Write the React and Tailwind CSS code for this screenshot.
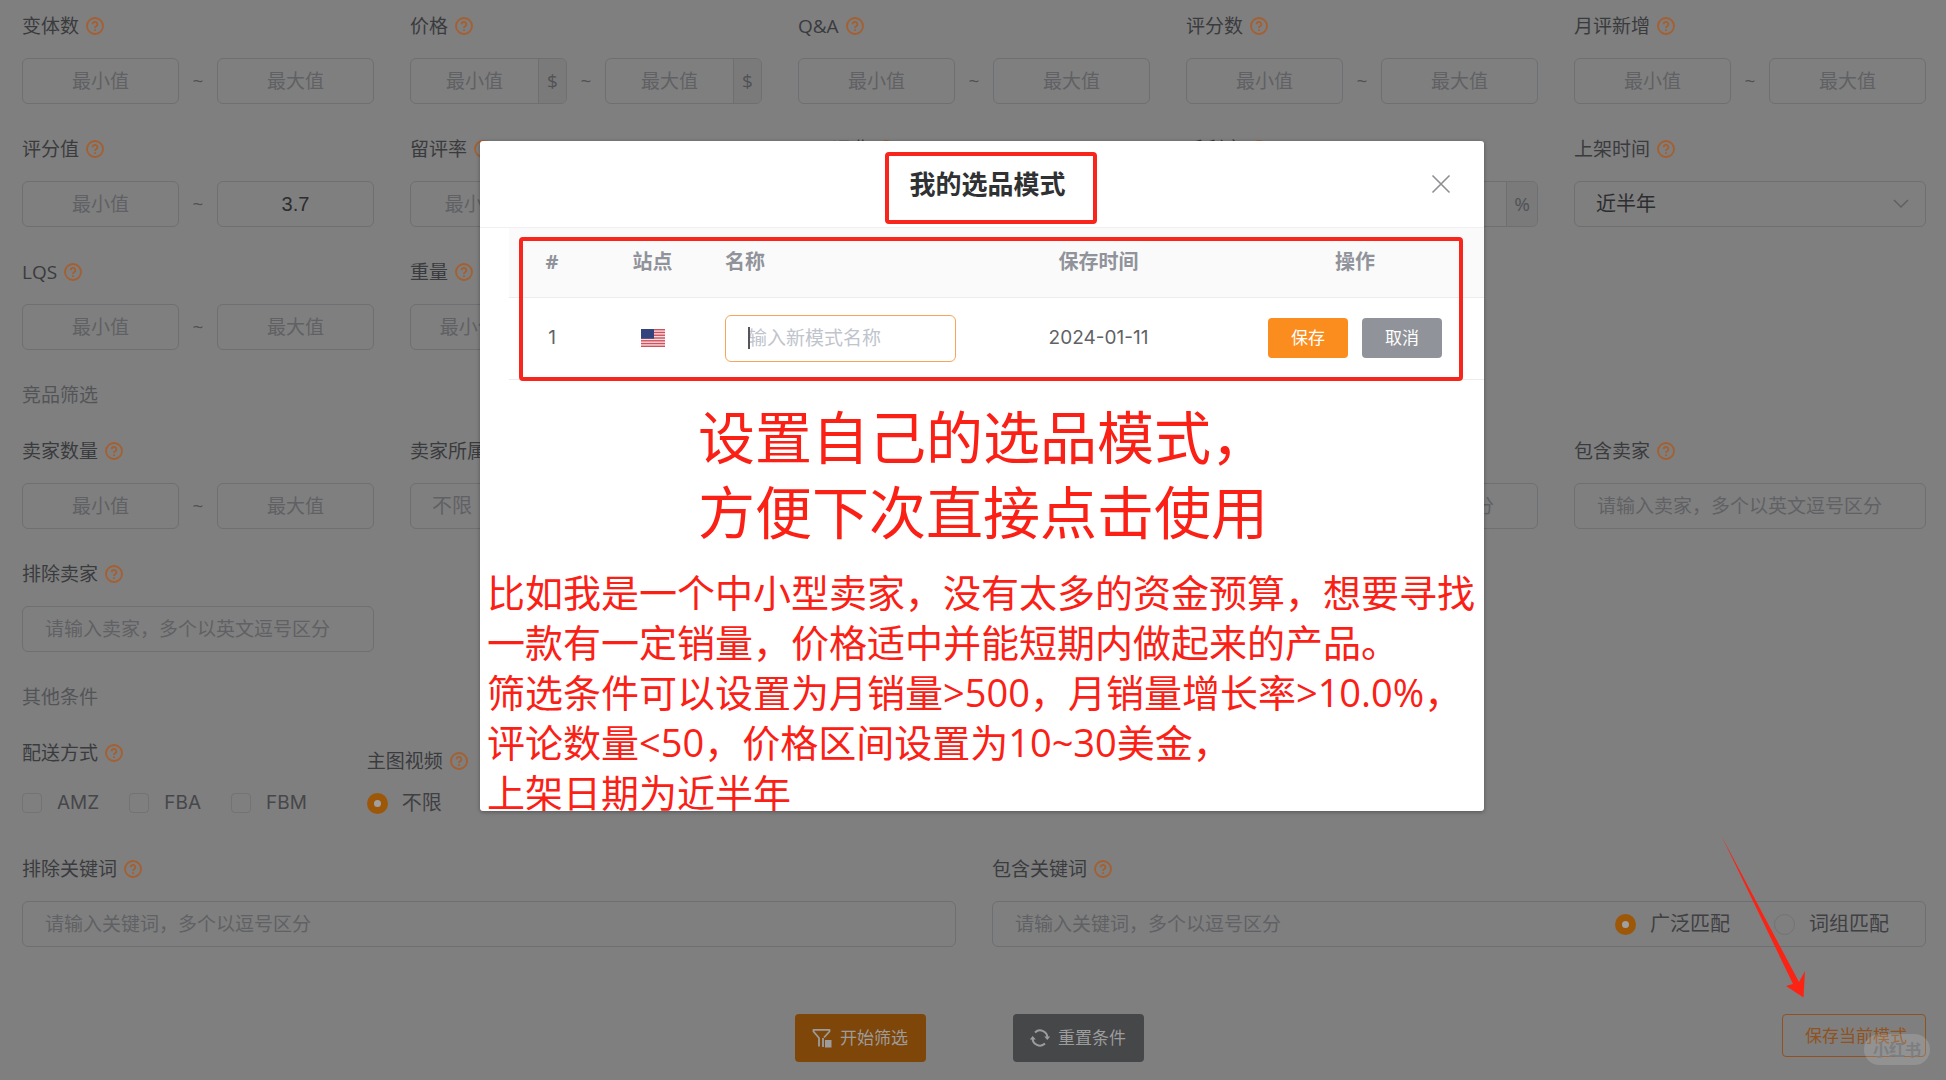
import React, { useState } from 'react';

const INPUT = 'min-w-0 bg-transparent outline-none placeholder:text-[19px] placeholder:text-[#606164]';
const BOX = 'flex h-[46px] rounded-md border border-[#6e6f72]';

// Orange question mark next to every filter label
function HelpIcon() {
    return (
        <svg className="h-[18px] w-[18px] shrink-0" viewBox="0 0 18 18" fill="none" stroke="#a55f30" strokeWidth="1.8">
            <circle cx="9" cy="9" r="8" />
            <path d="M6.700 7.300a2.300 2.300 0 1 1 3.400 1.900c-.8.5-1.100.8-1.100 1.700" />
            <path d="M9 12.200v1.700" />
        </svg>
    );
}

function Label({ text, htmlFor }) {
    return (
        <div className="flex h-7 items-center gap-[7px] text-[19px] leading-7 text-[#3a3b3e]">
            <label htmlFor={htmlFor} className="whitespace-nowrap">{text}</label>
            <HelpIcon />
        </div>
    );
}

function NumberBox({ id, label, placeholder, unit, defaultValue }) {
    return (
        <div className={`${BOX} min-w-0 flex-1 overflow-hidden`}>
            <input
                id={id}
                aria-label={label}
                placeholder={placeholder}
                defaultValue={defaultValue}
                className={`${INPUT} w-full flex-1 text-center font-['Liberation_Sans','Noto_Sans_CJK_SC',sans-serif] text-xl text-[#2c2d2f]`}
            />
            {unit && (
                <span className="flex min-w-7 items-center justify-center border-l border-[#6e6f72] bg-[#7a7a7b] px-[7px] text-[19px] text-[#515255]">
                    {unit}
                </span>
            )}
        </div>
    );
}

function RangeField({ id, label, unit, max }) {
    return (
        <div className="flex flex-col gap-[18px]">
            <Label text={label} htmlFor={id} />
            <div className="flex items-center">
                <NumberBox id={id} placeholder="最小值" unit={unit} />
                <span className="w-[38px] text-center text-[19px] text-[#515255]">~</span>
                <NumberBox label={label} placeholder="最大值" unit={unit} defaultValue={max} />
            </div>
        </div>
    );
}

function SelectField({ id, label, value, color = 'text-[#2c2d2f]' }) {
    return (
        <div className="flex flex-col gap-[18px]">
            <Label text={label} htmlFor={id} />
            <div className={`${BOX} relative items-center`}>
                <select id={id} className={`h-full w-full appearance-none bg-transparent pl-[21px] text-xl outline-none ${color}`}>
                    <option>{value}</option>
                </select>
                <svg className="pointer-events-none absolute right-4 h-[10px] w-4" viewBox="0 0 16 10" fill="none" stroke="#5f6063" strokeWidth="1.5">
                    <path d="M1 1l7 7 7-7" />
                </svg>
            </div>
        </div>
    );
}

function TextField({ id, label, placeholder, children }) {
    return (
        <div className="flex flex-col gap-[18px]">
            {label ? <Label text={label} htmlFor={id} /> : <div className="h-7" />}
            <div className={`${BOX} items-center`}>
                <input
                    id={id}
                    aria-label={label || '包含品牌'}
                    placeholder={placeholder}
                    className={`${INPUT} h-full flex-1 pl-[22px] text-[19px] text-[#2c2d2f]`}
                />
                {children}
            </div>
        </div>
    );
}

function Radio({ name, label, defaultChecked }) {
    return (
        <label className="flex items-center gap-[14px] whitespace-nowrap text-xl leading-7 text-[#3f4043]">
            <input
                type="radio"
                name={name}
                defaultChecked={defaultChecked}
                className="h-[21px] w-[21px] appearance-none rounded-full border border-[#727376] checked:border-[7px] checked:border-[#9c5808] checked:bg-[#a0a0a0]"
            />
            {label}
        </label>
    );
}

function Checkbox({ label }) {
    return (
        <label className="flex items-center gap-[15px] font-['Inter',sans-serif] text-[19px] leading-7 text-[#46474a]">
            <input type="checkbox" className="h-5 w-5 appearance-none rounded-sm border border-[#727376]" />
            {label}
        </label>
    );
}

function UsFlag() {
    return (
        <svg className="mx-auto h-[18px] w-6" viewBox="0 0 24 18" role="img" aria-label="US">
            <rect width="24" height="18" fill="#f6dfe1" />
            {[0, 1, 2, 3, 4, 5, 6].map(i => (
                <rect key={i} y={i * 2.77} width="24" height="1.4" fill="#d2505c" />
            ))}
            <rect width="13" height="9.7" fill="#33437c" />
        </svg>
    );
}

function ModeDialog({ onClose }) {
    return (
        <div
            role="dialog"
            aria-labelledby="mode-title"
            className="relative w-[1004px] max-w-full rounded-[3px] bg-white shadow-[0_1px_4px_rgba(0,0,0,0.35)]"
        >
            <header className="grid h-[87px] grid-cols-[1fr_auto_1fr] items-start border-b border-[#f0f0f3] pt-[11px] pl-[18px]">
                <span />
                <h2 id="mode-title" className="h-[72px] rounded-[4px] border-4 border-[#f7251c] pr-[27px] pl-5 pt-[10px] text-[26px] leading-9 font-bold text-[#303133]">
                    我的选品模式
                </h2>
                <button type="button" aria-label="关闭" onClick={onClose} className="mt-[22px] mr-[33px] justify-self-end">
                    <svg className="h-5 w-5" viewBox="0 0 20 20" stroke="#8d8e91" strokeWidth="1.6">
                        <path d="M1.5 1.5l17 17M18.5 1.5l-17 17" />
                    </svg>
                </button>
            </header>

            <div className="relative ml-[29px]">
                <table className="w-full table-fixed text-center text-[#606266]">
                    <colgroup>
                        <col className="w-[86px]" />
                        <col className="w-[115px]" />
                        <col className="w-[261px]" />
                        <col className="w-[255px]" />
                        <col className="w-[258px]" />
                    </colgroup>
                    <thead>
                        <tr className="h-[69px] border-b border-[#ebecef] bg-[#fafafb] text-xl text-[#909399]">
                            <th className="font-bold">#</th>
                            <th className="font-bold">站点</th>
                            <th className="pl-[15px] text-left font-bold">名称</th>
                            <th className="font-bold">保存时间</th>
                            <th className="font-bold">操作</th>
                        </tr>
                    </thead>
                    <tbody>
                        <tr className="h-[82px] border-b border-[#ebecef]">
                            <td className="font-['Inter',sans-serif] text-[19px]">1</td>
                            <td><UsFlag /></td>
                            <td className="pl-[15px] text-left">
                                <div className="relative flex h-[47px] w-[231px] items-center rounded-md border border-[#f5a65a]">
                                    <input
                                        aria-label="名称"
                                        placeholder="输入新模式名称"
                                        className="h-full w-full bg-transparent pl-[22px] text-[19px] outline-none placeholder:text-[#c0c4cc]"
                                    />
                                    <span className="absolute left-[22px] h-[22px] w-[2px] bg-[#55565c]" />
                                </div>
                            </td>
                            <td className="font-['Inter',sans-serif] text-[19px]">2024-01-11</td>
                            <td>
                                <div className="flex justify-center gap-[14px] text-[17px] text-white">
                                    <button type="button" className="h-10 w-20 rounded bg-[#fb8c1e]">保存</button>
                                    <button type="button" className="h-10 w-20 rounded bg-[#909399]">取消</button>
                                </div>
                            </td>
                        </tr>
                    </tbody>
                </table>
                {/* highlight frame round the table */}
                <div className="pointer-events-none absolute top-[9px] right-[21px] -bottom-px left-[10px] rounded-[4px] border-4 border-[#f7251c]" />
            </div>

            <div className="-mb-[6px] whitespace-nowrap text-[#fb2015]">
                <p className="pt-5 pl-[218px] text-[57px] leading-[75px]">
                    设置自己的选品模式，<br />
                    方便下次直接点击使用
                </p>
                <p className="pt-[17px] pl-[7px] text-[38px] leading-[50px]">
                    比如我是一个中小型卖家，没有太多的资金预算，想要寻找<br />
                    一款有一定销量，价格适中并能短期内做起来的产品。<br />
                    筛选条件可以设置为月销量&gt;500，月销量增长率&gt;10.0%，<br />
                    评论数量&lt;50，价格区间设置为10~30美金，<br />
                    上架日期为近半年
                </p>
            </div>
        </div>
    );
}

export default function App() {
    const [open, setOpen] = useState(true);

    return (
        <div lang="zh-CN" className="relative min-h-screen overflow-hidden bg-[#7f7f7f] pt-3 pr-5 pb-[18px] pl-[22px] font-['Open_Sans','Noto_Sans_CJK_SC',sans-serif]">
            <section className="grid grid-cols-5 gap-x-9 gap-y-[31px]">
                <RangeField id="variants" label="变体数" />
                <RangeField id="price" label="价格" unit="$" />
                <RangeField id="qa" label="Q&A" />
                <RangeField id="ratings" label="评分数" />
                <RangeField id="new-reviews" label="月评新增" />

                <RangeField id="score" label="评分值" max="3.7" />
                <RangeField id="review-rate" label="留评率" unit="%" />
                <RangeField id="fba-fee" label="FBA运费" unit="$" />
                <RangeField id="margin" label="毛利率" unit="%" />
                <SelectField id="listed" label="上架时间" value="近半年" />

                <RangeField id="lqs" label="LQS" />
                <RangeField id="weight" label="重量" unit="lbs" />
            </section>

            <h3 className="mt-[31px] mb-7 text-[19px] leading-7 text-[#535457]">竞品筛选</h3>
            <section className="grid grid-cols-5 gap-x-9 gap-y-[31px]">
                <RangeField id="sellers" label="卖家数量" />
                <SelectField id="seller-region" label="卖家所属地" value="不限" color="text-[#606164]" />
                <div />
                <TextField id="brand" placeholder="请输入品牌，多个以英文逗号区分" />
                <TextField id="include-seller" label="包含卖家" placeholder="请输入卖家，多个以英文逗号区分" />
                <TextField id="exclude-seller" label="排除卖家" placeholder="请输入卖家，多个以英文逗号区分" />
            </section>

            <h3 className="mt-[31px] mb-7 text-[19px] leading-7 text-[#535457]">其他条件</h3>
            <section className="flex items-end gap-[60px]">
                <div className="flex flex-col gap-[22px]">
                    <Label text="配送方式" />
                    <div className="flex gap-[30px]">
                        <Checkbox label="AMZ" />
                        <Checkbox label="FBA" />
                        <Checkbox label="FBM" />
                    </div>
                </div>
                <div className="flex flex-col gap-[14px]">
                    <Label text="主图视频" />
                    <Radio name="video" label="不限" defaultChecked />
                </div>
            </section>

            <section className="mt-[38px] grid grid-cols-2 gap-x-9">
                <TextField id="exclude-kw" label="排除关键词" placeholder="请输入关键词，多个以逗号区分" />
                <TextField id="include-kw" label="包含关键词" placeholder="请输入关键词，多个以逗号区分">
                    <div className="flex gap-11 pr-9">
                        <Radio name="match" label="广泛匹配" defaultChecked />
                        <Radio name="match" label="词组匹配" />
                    </div>
                </TextField>
            </section>

            <footer className="mt-[67px] grid grid-cols-[1fr_auto_1fr] items-start">
                <span />
                <div className="flex gap-[87px] pr-[10px] text-[17px] text-[#9c9c9c]">
                    <button type="button" className="flex h-12 w-[131px] items-center justify-center gap-2 rounded bg-[#7f4609]">
                        <svg className="h-5 w-5" viewBox="0 0 20 20" fill="none" stroke="currentColor" strokeWidth="1.8">
                            <path d="M7 18.5V10L1.5 3.5V1.8h16v1.7L12 9.5" strokeLinejoin="round" />
                            <path d="M11 19V10" />
                            <path d="M13 12h6.5v7.5H13z" fill="currentColor" stroke="none" />
                        </svg>
                        开始筛选
                    </button>
                    <button type="button" className="flex h-12 w-[131px] items-center justify-center gap-2 rounded bg-[#464749]">
                        <svg className="h-5 w-5" viewBox="0 0 20 20" fill="none" stroke="currentColor" strokeWidth="2">
                            <path d="M5 4.4a7.4 7.4 0 0 1 12.4 5.6M15 15.6A7.4 7.4 0 0 1 2.6 10" />
                            <path d="M14.2 8.6h6L17.3 12zM-.2 11.4h6L2.7 8z" fill="currentColor" stroke="none" />
                        </svg>
                        重置条件
                    </button>
                </div>
                <div className="relative justify-self-end">
                    <button
                        type="button"
                        onClick={() => setOpen(true)}
                        className="h-[43px] w-36 rounded border border-[#8f5220] pl-1 text-[17px] text-[#8f5220]"
                    >
                        保存当前模式
                    </button>
                    <svg className="pointer-events-none absolute -top-[179px] -left-[62px] h-[164px] w-[88px]" viewBox="0 0 88 164" fill="#fb2414">
                        <path d="M1.500 1L79 147l6-11-1.500 26.500L66 151l7-2z" />
                    </svg>
                    <span className="pointer-events-none absolute top-5 -right-1 flex h-[31px] w-[66px] items-center justify-center rounded-full bg-white/15 text-base font-bold text-[#7d7e80]">
                        小红书
                    </span>
                </div>
            </footer>

            {open && (
                <div className="absolute inset-x-0 top-[141px] flex justify-center pl-[18px]">
                    <ModeDialog onClose={() => setOpen(false)} />
                </div>
            )}
        </div>
    );
}
